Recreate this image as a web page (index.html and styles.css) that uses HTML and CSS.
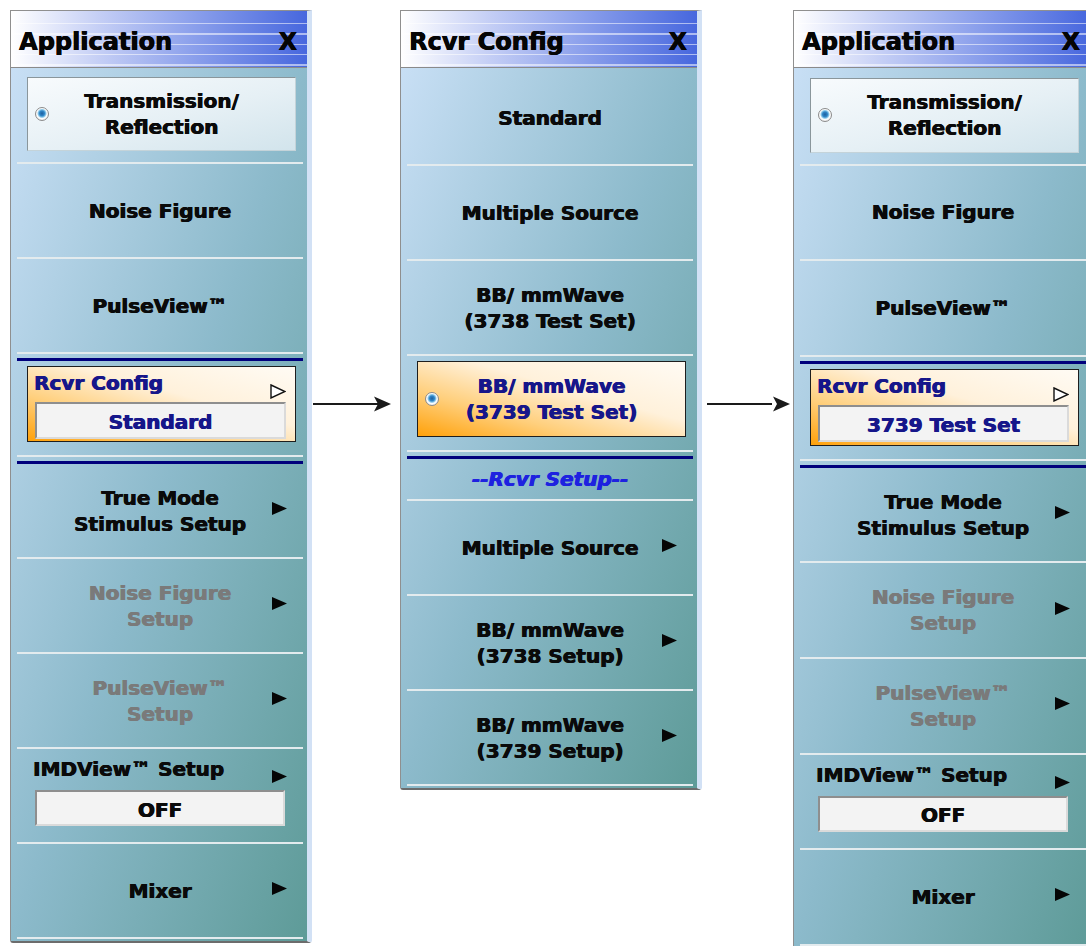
FILE: index.html
```html
<!DOCTYPE html>
<html>
<head>
  <title>Application / Rcvr Config</title>
  <link rel="stylesheet" href="styles.css">
</head>
<body>
  <div class="stage">

    <div class="panel panel-first">
      <div class="panel-head"><span>Application</span><span class="close">X</span></div>
      <div class="panel-body">
        <div class="item item-top">
          <div class="choice">
            <span class="radio"></span>
            <span class="label">Transmission/<br>Reflection</span>
          </div>
        </div>
        <div class="item"><span class="label">Noise Figure</span></div>
        <div class="item"><span class="label">PulseView™</span></div>
        <div class="rule"></div>
        <div class="item item-box">
          <div class="config">
            <div class="config-title"><span>Rcvr Config</span><svg class="tri-open" width="16" height="15" viewBox="0 0 16 15"><polygon points="1,1 15,7.5 1,14" fill="#fff" stroke="#111" stroke-width="1.4"/></svg></div>
            <div class="value value-navy">Standard</div>
          </div>
        </div>
        <div class="rule"></div>
        <div class="item"><span class="label">True Mode<br>Stimulus Setup</span><svg class="tri" width="15" height="13" viewBox="0 0 15 13"><polygon points="0,0 15,6.5 0,13"/></svg></div>
        <div class="item"><span class="label muted">Noise Figure<br>Setup</span><svg class="tri" width="15" height="13" viewBox="0 0 15 13"><polygon points="0,0 15,6.5 0,13"/></svg></div>
        <div class="item"><span class="label muted">PulseView™<br>Setup</span><svg class="tri" width="15" height="13" viewBox="0 0 15 13"><polygon points="0,0 15,6.5 0,13"/></svg></div>
        <div class="item item-field">
          <div class="field-title"><span>IMDView™ Setup</span><svg class="tri-low" width="15" height="13" viewBox="0 0 15 13"><polygon points="0,0 15,6.5 0,13"/></svg></div>
          <div class="value">OFF</div>
        </div>
        <div class="item"><span class="label">Mixer</span><svg class="tri" width="15" height="13" viewBox="0 0 15 13"><polygon points="0,0 15,6.5 0,13"/></svg></div>
      </div>
    </div>

    <svg class="arrow" width="88" height="20" viewBox="0 0 88 20">
      <line x1="1" y1="10" x2="70" y2="10" stroke="#1a1a1a" stroke-width="2"/>
      <polygon points="62,2.5 79,10 62,17.5 66,10" fill="#1a1a1a"/>
    </svg>

    <div class="panel panel-second">
      <div class="panel-head"><span>Rcvr Config</span><span class="close">X</span></div>
      <div class="panel-body">
        <div class="item"><span class="label">Standard</span></div>
        <div class="item"><span class="label">Multiple Source</span></div>
        <div class="item"><span class="label">BB/ mmWave<br>(3738 Test Set)</span></div>
        <div class="item item-box">
          <div class="choice choice-orange">
            <span class="radio"></span>
            <span class="label navy">BB/ mmWave<br>(3739 Test Set)</span>
          </div>
        </div>
        <div class="rule"></div>
        <div class="item item-caption"><span class="label caption">--Rcvr Setup--</span></div>
        <div class="item"><span class="label">Multiple Source</span><svg class="tri" width="15" height="13" viewBox="0 0 15 13"><polygon points="0,0 15,6.5 0,13"/></svg></div>
        <div class="item"><span class="label">BB/ mmWave<br>(3738 Setup)</span><svg class="tri" width="15" height="13" viewBox="0 0 15 13"><polygon points="0,0 15,6.5 0,13"/></svg></div>
        <div class="item"><span class="label">BB/ mmWave<br>(3739 Setup)</span><svg class="tri" width="15" height="13" viewBox="0 0 15 13"><polygon points="0,0 15,6.5 0,13"/></svg></div>
      </div>
    </div>

    <svg class="arrow arrow-second" width="91" height="20" viewBox="0 0 91 20">
      <line x1="5" y1="10" x2="70" y2="10" stroke="#1a1a1a" stroke-width="2"/>
      <polygon points="71,2.5 88,10 71,17.5 75,10" fill="#1a1a1a"/>
    </svg>

    <div class="panel panel-third">
      <div class="panel-head"><span>Application</span><span class="close">X</span></div>
      <div class="panel-body">
        <div class="item item-top">
          <div class="choice">
            <span class="radio"></span>
            <span class="label">Transmission/<br>Reflection</span>
          </div>
        </div>
        <div class="item"><span class="label">Noise Figure</span></div>
        <div class="item"><span class="label">PulseView™</span></div>
        <div class="rule"></div>
        <div class="item item-box">
          <div class="config">
            <div class="config-title"><span>Rcvr Config</span><svg class="tri-open" width="16" height="15" viewBox="0 0 16 15"><polygon points="1,1 15,7.5 1,14" fill="#fff" stroke="#111" stroke-width="1.4"/></svg></div>
            <div class="value value-navy">3739 Test Set</div>
          </div>
        </div>
        <div class="rule"></div>
        <div class="item"><span class="label">True Mode<br>Stimulus Setup</span><svg class="tri" width="15" height="13" viewBox="0 0 15 13"><polygon points="0,0 15,6.5 0,13"/></svg></div>
        <div class="item"><span class="label muted">Noise Figure<br>Setup</span><svg class="tri" width="15" height="13" viewBox="0 0 15 13"><polygon points="0,0 15,6.5 0,13"/></svg></div>
        <div class="item"><span class="label muted">PulseView™<br>Setup</span><svg class="tri" width="15" height="13" viewBox="0 0 15 13"><polygon points="0,0 15,6.5 0,13"/></svg></div>
        <div class="item item-field">
          <div class="field-title"><span>IMDView™ Setup</span><svg class="tri-low" width="15" height="13" viewBox="0 0 15 13"><polygon points="0,0 15,6.5 0,13"/></svg></div>
          <div class="value">OFF</div>
        </div>
        <div class="item"><span class="label">Mixer</span><svg class="tri" width="15" height="13" viewBox="0 0 15 13"><polygon points="0,0 15,6.5 0,13"/></svg></div>
      </div>
    </div>

  </div>
</body>
</html>
```

FILE: styles.css
```css
body {
  margin: 0;
  background: #fff;
  font-family: "DejaVu Sans", Verdana, sans-serif;
  font-weight: bold;
  color: #0a0a0a;
}
.stage {
  width: 1086px;
  height: 946px;
  overflow: hidden;
  display: flex;
  align-items: flex-start;
  padding: 10px 0 0 10px;
  box-sizing: border-box;
}
.panel {
  --item-h: 93px;
  --box-h: 76px;
  flex: none;
  width: 302px;
  box-sizing: border-box;
  border: 1px solid #8f8f8f;
  border-right: 5px solid #d2e1f5;
  border-bottom: 2px solid #6c6c6c;
  border-radius: 0 0 3px 3px;
  text-shadow: 0.6px 0 0 currentColor, -0.3px 0 0 currentColor;
}
.panel-third {
  --item-h: 93.6px;
  --box-h: 77px;
}
.panel-head {
  height: 57px;
  box-sizing: border-box;
  padding: 5px 10px 0 8px;
  display: flex;
  align-items: center;
  justify-content: space-between;
  font-size: 24px;
  color: #050505;
  border-bottom: 1px solid #8a8a8a;
  background:
    repeating-linear-gradient(to bottom, rgba(255,255,255,0.55) 0, rgba(255,255,255,0.55) 1.4px, transparent 1.4px, transparent 10.3px) 0 12px / 100% 46px no-repeat,
    linear-gradient(to right, #ffffff 0%, #c4cef5 30%, #8ea2ec 60%, #4767de 100%);
}
.panel-body {
  padding: 1px 0 2px;
  background: linear-gradient(to bottom right, #c8dff5 0%, #8cbacb 50%, #5e9b98 100%);
}
.panel-second .panel-body {
  padding-top: 3px;
}
.panel-third .panel-body {
  padding-top: 2px;
}

.item {
  box-sizing: border-box;
  height: calc(var(--item-h) + 2px);
  margin: 0 4px 0 6px;
  border-bottom: 2px solid #e3ebee;
  display: grid;
  grid-template-columns: 32px 1fr 32px;
  align-items: center;
}
.label {
  grid-column: 2;
  text-align: center;
  font-size: 20px;
  line-height: 26px;
  white-space: nowrap;
}
.muted {
  color: #7a7a7a;
}
.navy {
  color: #16168a;
}
.caption {
  color: #1e22e0;
  font-style: italic;
}
.tri {
  grid-column: 3;
  margin-left: 1px;
  margin-top: -4px;
  fill: #050505;
}

.rule {
  height: 3px;
  margin: 4px 4px 0 6px;
  background: #00007c;
}

.item-top,
.item-box {
  display: block;
  padding: 8px 7px 0 10px;
}
.item-box {
  height: 96px;
  padding-top: 5px;
}
.panel-third .item-box {
  height: 97px;
}
.item-caption {
  height: 42px;
}

.choice {
  height: calc(var(--item-h) - 19px);
  box-sizing: border-box;
  border: 1px solid #8a969b;
  border-right-color: #c4d3d9;
  border-bottom-color: #c4d3d9;
  background: linear-gradient(to bottom right, #f8fbfd 0%, #e6f0f5 55%, #d2e4ec 100%);
  display: grid;
  grid-template-columns: 30px 1fr 30px;
  align-items: center;
}
.choice-orange {
  height: 76px;
  border: 1px solid #1e1e1e;
  background: linear-gradient(to top right, #ffa10a 0%, #ffcf7c 30%, #fff1db 60%, #fffbf4 100%);
}
.radio {
  width: 14px;
  height: 14px;
  margin-left: 7px;
  box-sizing: border-box;
  border-radius: 50%;
  border: 1px solid #8b8b8b;
  background: radial-gradient(circle at 50% 45%, #1d5f9e 0, #2f86c8 28%, #8fcbea 44%, #ffffff 56%, #d0d0d0 100%);
}

.config {
  height: var(--box-h);
  box-sizing: border-box;
  padding: 4px 9px 2px 6px;
  border: 1px solid #1e1e1e;
  background: linear-gradient(to top right, #ffa10a 0%, #ffcf7c 30%, #fff1db 60%, #fffbf4 100%);
}
.config-title {
  height: 26px;
  display: flex;
  justify-content: space-between;
  align-items: flex-end;
  font-size: 20px;
  line-height: 24px;
  color: #16168a;
}
.config-title span {
  align-self: flex-start;
}
.tri-open {
  margin-bottom: -2px;
}
.config .value {
  margin: 5px 0 0 1px;
}

.value {
  height: 37px;
  box-sizing: border-box;
  padding-top: 3px;
  border: 2px solid #8e8e8e;
  border-right-color: #dadada;
  border-bottom-color: #dadada;
  background: #f3f3f3;
  display: flex;
  align-items: center;
  justify-content: center;
  font-size: 20px;
  color: #0a0a0a;
}
.value-navy {
  color: #16168a;
}

.item-field {
  display: block;
  padding-top: 8px;
}
.field-title {
  height: 24px;
  display: flex;
  justify-content: space-between;
  align-items: flex-end;
  padding: 0 16px;
  font-size: 20px;
  line-height: 24px;
}
.tri-low {
  margin-bottom: -2px;
  fill: #050505;
}
.item-field .value {
  margin: 9px 18px 0 18px;
  height: 36px;
}

.arrow {
  flex: none;
  margin-top: 384px;
}
```
